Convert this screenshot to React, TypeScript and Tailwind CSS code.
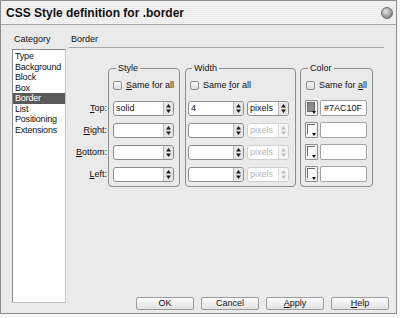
import React from 'react'

function Spin({ dim }: { dim?: boolean }) {
  return (
    <span
      className={
        dim
          ? 'flex w-[10px] items-center justify-center self-stretch rounded-r-[3px] border-l border-[#dcdcdc] bg-[#f6f6f6]'
          : 'flex w-[10px] items-center justify-center self-stretch rounded-r-[3px] border-l border-[#b8b8b8] bg-[#e6e6e6]'
      }
    >
      <svg width="5" height="9" viewBox="0 0 5 9">
        <path d="M2.5 0L5 3.5H0Z M2.5 9L0 5.5H5Z" fill={dim ? '#bdbdbd' : '#1e1e1e'} />
      </svg>
    </span>
  )
}

function Select({ value, w, dim }: { value?: string; w: string; dim?: boolean }) {
  return (
    <div
      className={
        'flex h-[15px] items-center rounded-[3px] border bg-white text-[9px] leading-none ' +
        w +
        (dim ? ' border-[#cfcfcf] text-[#b5b5b5]' : ' border-[#8d8d8d] text-[#111]')
      }
    >
      <span className="flex-1 pl-[2px]">{value}</span>
      <Spin dim={dim} />
    </div>
  )
}

function Check({ label }: { label: [string, string, string] }) {
  return (
    <div className="flex h-[13px] items-center gap-[4px] whitespace-nowrap text-[9px] text-[#111]">
      <span className="h-[9px] w-[9px] shrink-0 rounded-[2px] border border-[#8f8f8f] bg-gradient-to-b from-[#f7f7f7] to-[#dcdcdc]" />
      <span>
        {label[0]}
        <span className="underline">{label[1]}</span>
        {label[2]}
      </span>
    </div>
  )
}

function Swatch({ fill }: { fill?: boolean }) {
  return (
    <div className="relative h-[16px] w-[13px] shrink-0 rounded-[1px] border border-[#8d8d8d] bg-[#f2f2f2]">
      <div
        className={
          fill
            ? 'ml-[1px] mt-[1px] h-[10px] w-[8px] border border-[#6e6e6e] bg-[#8a8a8a]'
            : 'ml-[1px] mt-[1px] h-[10px] w-[8px] border-l border-t border-[#6e6e6e] bg-[#fbfbfb]'
        }
      />
      <svg className="absolute bottom-[1px] right-[1px]" width="4" height="3" viewBox="0 0 4 3">
        <path d="M0 0H4L2 3Z" fill="#111" />
      </svg>
    </div>
  )
}

function Field({ value }: { value?: string }) {
  return (
    <div className="flex h-[16px] w-[47px] items-center whitespace-nowrap rounded-[2px] border border-[#a2a2a2] bg-white pl-[3px] text-[9px] leading-none text-[#111]">
      {value}
    </div>
  )
}

function Button({ pre, u, post }: { pre: string; u: string; post: string }) {
  return (
    <div className="flex h-[13px] w-[58px] items-center justify-center rounded-[2px] border border-[#9c9c9c] bg-gradient-to-b from-[#fbfbfb] to-[#e2e2e2] text-[9px] leading-none text-[#111]">
      {pre}
      <span className="underline">{u}</span>
      {post}
    </div>
  )
}

const categories = ['Type', 'Background', 'Block', 'Box', 'Border', 'List', 'Positioning', 'Extensions']

export default function App() {
  return (
    <div className="h-[318px] w-[400px] bg-[#f7f7f7] font-['Liberation_Sans',Arial,sans-serif]">
      <div className="flex h-[314px] w-[397px] flex-col border border-[#8e8e8e] bg-[#eaeaea]">
        {/* title bar */}
        <div className="flex h-[24px] items-center justify-between border-b border-[#a9a9a9] bg-[repeating-linear-gradient(to_bottom,#f3f3f3_0px,#f3f3f3_1px,#ebebeb_1px,#ebebeb_2px)] pl-[5px] pr-[3px]">
          <span className="text-[12px] font-bold text-[#111]">CSS Style definition for .border</span>
          <span className="h-[12px] w-[12px] rounded-full border border-[#6f6f6f] bg-[radial-gradient(circle_at_40%_35%,#e8e8e8,#8a8a8a_70%,#5e5e5e)]" />
        </div>

        <div className="flex flex-1">
          {/* category column */}
          <div className="ml-[11px] flex w-[54px] flex-col pb-[10px] pt-[8px]">
            <div className="h-[12px] pl-[2px] text-[9px] leading-[12px] text-[#111]">Category</div>
            <div className="mt-[4px] flex-1 border border-[#8c8c8c] border-r-[#c4c4c4] border-b-[#c4c4c4] bg-white pt-[1px]">
              {categories.map((c) => (
                <div
                  key={c}
                  className={
                    c === 'Border'
                      ? 'h-[10.5px] bg-[#5a5a5a] pl-[2px] text-[9px] leading-[10.5px] tracking-[-0.2px] text-white'
                      : 'h-[10.5px] pl-[2px] text-[9px] leading-[10.5px] tracking-[-0.2px] text-[#111]'
                  }
                >
                  {c}
                </div>
              ))}
            </div>
          </div>

          {/* right panel */}
          <div className="ml-[3px] flex w-[320px] flex-col pb-[3px] pt-[8px]">
            <div className="mr-[5px] h-[15px] border-b border-[#a8a8a8] pl-[2px] text-[9px] leading-[12px] text-[#111]">
              Border
            </div>

            <div className="mt-[14px] flex">
              <div className="flex w-[39px] flex-col gap-[7px] pr-[1px] pt-[39px] text-right text-[9px] text-[#111]">
                <div className="h-[15px] leading-[15px]"><span className="underline">T</span>op:</div>
                <div className="h-[15px] leading-[15px]"><span className="underline">R</span>ight:</div>
                <div className="h-[15px] leading-[15px]"><span className="underline">B</span>ottom:</div>
                <div className="h-[15px] leading-[15px]"><span className="underline">L</span>eft:</div>
              </div>

              <fieldset className="w-[72px] rounded-[4px] border border-[#8c8c8c] pb-[4px] pl-[4px] pr-[5px]">
                <legend className="ml-[3px] px-[2px] text-[9px] leading-[12px] text-[#111]">Style</legend>
                <div className="mt-[5px]">
                  <Check label={['', 'S', 'ame for all']} />
                </div>
                <div className="mt-[9px] flex flex-col gap-[7px]">
                  <Select value="solid" w="w-[61px]" />
                  <Select w="w-[61px]" />
                  <Select w="w-[61px]" />
                  <Select w="w-[61px]" />
                </div>
              </fieldset>

              <fieldset className="ml-[5px] w-[109px] rounded-[4px] border border-[#8c8c8c] pb-[4px] pl-[2px] pr-[6px]">
                <legend className="ml-[4px] px-[2px] text-[9px] leading-[12px] text-[#111]">Width</legend>
                <div className="mt-[5px] pl-[2px]">
                  <Check label={['Same ', 'f', 'or all']} />
                </div>
                <div className="mt-[9px] flex flex-col gap-[7px]">
                  <div className="flex gap-[3px]">
                    <Select value="4" w="w-[56px]" />
                    <Select value="pixels" w="w-[42px]" />
                  </div>
                  <div className="flex gap-[3px]">
                    <Select w="w-[56px]" />
                    <Select value="pixels" w="w-[42px]" dim />
                  </div>
                  <div className="flex gap-[3px]">
                    <Select w="w-[56px]" />
                    <Select value="pixels" w="w-[42px]" dim />
                  </div>
                  <div className="flex gap-[3px]">
                    <Select w="w-[56px]" />
                    <Select value="pixels" w="w-[42px]" dim />
                  </div>
                </div>
              </fieldset>

              <fieldset className="ml-[4px] w-[73px] rounded-[4px] border border-[#8c8c8c] pb-[4px] pl-[4px] pr-[4px]">
                <legend className="ml-[3px] px-[2px] text-[9px] leading-[12px] text-[#111]">Color</legend>
                <div className="mt-[5px] pl-[1px]">
                  <Check label={['Same for ', 'a', 'll']} />
                </div>
                <div className="mt-[8px] flex flex-col gap-[6px]">
                  <div className="flex items-center gap-[2px]">
                    <Swatch fill />
                    <Field value="#7AC10F" />
                  </div>
                  <div className="flex items-center gap-[2px]">
                    <Swatch />
                    <Field />
                  </div>
                  <div className="flex items-center gap-[2px]">
                    <Swatch />
                    <Field />
                  </div>
                  <div className="flex items-center gap-[2px]">
                    <Swatch />
                    <Field />
                  </div>
                </div>
              </fieldset>
            </div>

            <div className="mt-auto flex justify-end gap-[7px]">
              <Button pre="OK" u="" post="" />
              <Button pre="Cancel" u="" post="" />
              <Button pre="" u="A" post="pply" />
              <Button pre="" u="H" post="elp" />
            </div>
          </div>
        </div>
      </div>
    </div>
  )
}
